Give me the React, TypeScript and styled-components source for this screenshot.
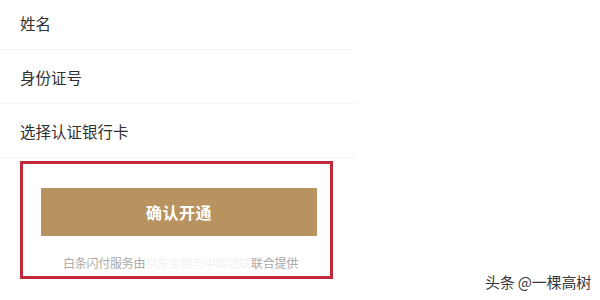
import styled, { createGlobalStyle } from 'styled-components'

const GlobalStyle = createGlobalStyle`
  html, body {
    margin: 0;
    padding: 0;
    background: #ffffff;
  }
  body {
    font-family: "Noto Sans CJK SC", "Liberation Sans", sans-serif;
  }
`

const Page = styled.div`
  position: relative;
  width: 600px;
  height: 300px;
  overflow: hidden;
  background: #fff;
`

const Form = styled.div`
  width: 355px;
  margin-top: -4px;
  display: flex;
  flex-direction: column;
`

const Row = styled.div`
  height: 54px;
  box-sizing: border-box;
  display: flex;
  align-items: center;
  padding-left: 20px;
  border-bottom: 1px solid #f5f5f5;
  font-size: 15.5px;
  color: #2f2f2f;
`

const Highlight = styled.div`
  margin: 3px 0 0 20px;
  width: 313px;
  height: 118px;
  box-sizing: border-box;
  border: 3px solid #c0283b;
  display: flex;
  flex-direction: column;
  padding: 24px 0 0 18px;
`

const ConfirmButton = styled.button`
  width: 276px;
  height: 48px;
  border: none;
  border-radius: 1px;
  background: #b8935f;
  color: #fff;
  font-family: inherit;
  font-size: 16px;
  font-weight: 700;
  letter-spacing: 0.5px;
  cursor: pointer;
`

const Note = styled.div`
  margin-top: 18px;
  padding-left: 22px;
  font-size: 12px;
  letter-spacing: -0.25px;
  color: #a9a9a9;
  white-space: nowrap;
`

const Hidden = styled.span`
  color: #f2f2f2;
`

const Watermark = styled.div`
  position: absolute;
  right: 9px;
  bottom: 8px;
  font-size: 15px;
  color: #3a3a3a;
  letter-spacing: -0.2px;
`

export default function App() {
  return (
    <>
      <GlobalStyle />
      <Page>
        <Form>
          <Row>姓名</Row>
          <Row>身份证号</Row>
          <Row>选择认证银行卡</Row>
        </Form>
        <Highlight>
          <ConfirmButton>确认开通</ConfirmButton>
          <Note>
            白条闪付服务由<Hidden>京东金融与中国银联</Hidden>联合提供
          </Note>
        </Highlight>
        <Watermark>头条 @一棵高树</Watermark>
      </Page>
    </>
  )
}
